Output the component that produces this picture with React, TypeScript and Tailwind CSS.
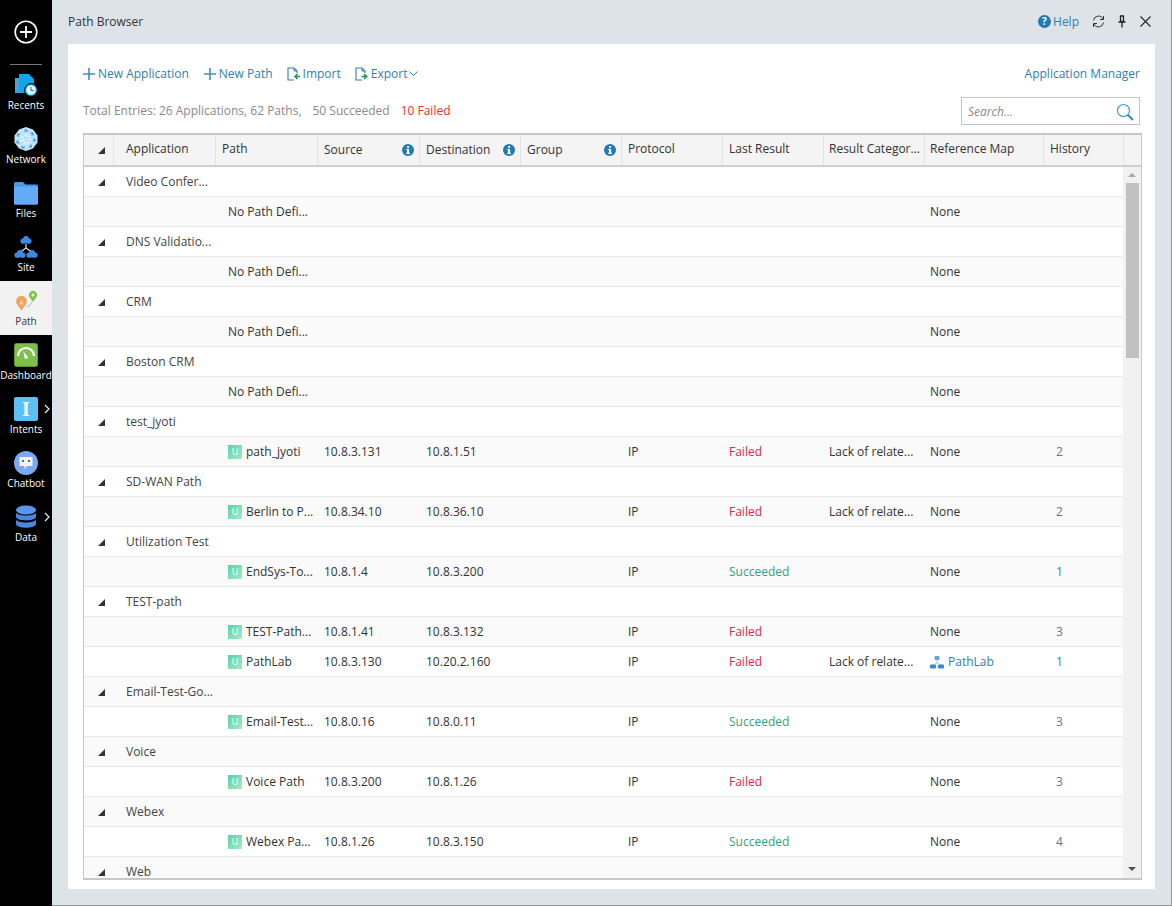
import React from "react";

const Tri = () => (
  <svg width="7" height="7" viewBox="0 0 7 7" className="block"><path d="M7 0V7H0Z" fill="#333" /></svg>
);

const Info = () => (
  <svg width="12" height="12" viewBox="0 0 13 13" className="block shrink-0">
    <circle cx="6.5" cy="6.5" r="6.5" fill="#1f7ab5" />
    <rect x="5.5" y="2.2" width="2.2" height="2" fill="#fff" />
    <path d="M4.6 5.3H7.7V9.6H8.6V10.8H4.6V9.6H5.5V6.5H4.6Z" fill="#fff" />
  </svg>
);

const Plus = () => (
  <svg width="12" height="12" viewBox="0 0 12 12" className="block"><path d="M6 0V12M0 6H12" stroke="#3f8fc0" strokeWidth="1.6" /></svg>
);

const FileIcon = ({ flip }: { flip?: boolean }) => (
  <svg width="13" height="14" viewBox="0 0 13 14" className="block">
    <path d="M7 13H1V1H7L10 4V6" fill="none" stroke="#2a7fb5" strokeWidth="1.1" />
    <path d="M7 1V4H10" fill="none" stroke="#2a7fb5" strokeWidth="1" />
    {flip ? (
      <path d="M13 9.5H8.5M10.6 7L8 9.5L10.6 12" fill="none" stroke="#1f9a55" strokeWidth="1.7" />
    ) : (
      <path d="M6.5 9.5H11M9 7L11.6 9.5L9 12" fill="none" stroke="#1f9a55" strokeWidth="1.7" />
    )}
  </svg>
);

const Recents = () => (
  <svg width="24" height="24" viewBox="0 0 24 24" className="block">
    <path d="M1 5H5V20H1Z" fill="#4a9fd8" />
    <path d="M5 1H15L20 6V20H5Z" fill="#0fa8e6" />
    <circle cx="17" cy="17" r="6.4" fill="#0fa8e6" stroke="#000" strokeWidth="1" />
    <circle cx="17" cy="17" r="4.8" fill="#e8f6fd" />
    <path d="M17 14V17.5H20" fill="none" stroke="#0f8fd0" strokeWidth="1.2" />
  </svg>
);

const NetworkIcon = () => (
  <svg width="24" height="24" viewBox="0 0 24 24" className="block">
    <path d="M12 0L19 2.5L23.5 8.5L23.5 15.5L19 21.5L12 24L5 21.5L.5 15.5L.5 8.5L5 2.5Z" fill="#bfe3fa" />
    <g fill="#3f9fe0">
      <circle cx="12" cy="4" r="1.7" /><circle cx="18" cy="7" r="1.7" /><circle cx="20" cy="13" r="1.7" />
      <circle cx="16.5" cy="19" r="1.7" /><circle cx="9" cy="20" r="1.7" /><circle cx="4" cy="15" r="1.7" />
      <circle cx="4.5" cy="8" r="1.7" /><circle cx="12" cy="12" r="2" />
    </g>
    <path d="M12 4L12 12L18 7M20 13L12 12L16.5 19M9 20L12 12L4 15M4.500 8L12 12" stroke="#fff" strokeWidth=".8" fill="none" />
  </svg>
);

const Folder = () => (
  <svg width="24" height="24" viewBox="0 0 24 24" className="block">
    <path d="M0 2.500Q0 1 1.500 1H9L11.500 3.500H22.500Q24 3.500 24 5V22Q24 23.500 22.500 23.500H1.500Q0 23.500 0 22Z" fill="#4b98ea" />
    <path d="M0 7Q0 5.500 1.500 5.500H22.500Q24 5.500 24 7V22Q24 23.500 22.500 23.500H1.500Q0 23.500 0 22Z" fill="#64aaf6" />
  </svg>
);

const Cloud = ({ x, y }: { x: number; y: number }) => (
  <g transform={`translate(${x} ${y})`} fill="#3f8ae0">
    <circle cx="3" cy="5" r="2.600" /><circle cx="6" cy="3" r="3" /><circle cx="9" cy="5" r="2.600" />
    <rect x="1.500" y="4.500" width="9" height="3" rx="1.300" />
  </g>
);

const SiteIcon = () => (
  <svg width="24" height="24" viewBox="0 0 24 24" className="block">
    <path d="M12 9V13M12 13L5 18M12 13L19 18" stroke="#cfe3f7" strokeWidth="1.200" fill="none" />
    <Cloud x={6} y={1} /><Cloud x={0} y={15} /><Cloud x={12} y={15} />
  </svg>
);

const PathIcon = () => (
  <svg width="24" height="24" viewBox="0 0 24 24" className="block">
    <path d="M12 17H15L18 13" stroke="#b9d6f2" strokeWidth="1.400" fill="none" />
    <path d="M7.500 21.500L3.300 15.800A5.400 5.400 0 1 1 11.700 15.800Z" fill="#f0a35a" />
    <text x="7.500" y="15.500" textAnchor="middle" fontSize="7" fill="#fbe3c8" fontFamily="Open Sans">A</text>
    <path d="M19 13L15.900 8.500A4 4 0 1 1 22.100 8.500Z" fill="#7cc24a" />
    <circle cx="19" cy="6" r="1.700" fill="#dff2c8" />
  </svg>
);

const DashIcon = () => (
  <svg width="24" height="24" viewBox="0 0 24 24" className="block">
    <rect x=".5" y=".5" width="23" height="23" rx="2" fill="#7fc04c" stroke="#5a9435" />
    <path d="M4 13A8 8 0 0 1 20 13" fill="none" stroke="#fff" strokeWidth="2.200" />
    <path d="M11 14L9 8L13 13Z" fill="#fff" />
    <circle cx="12" cy="14" r="1.800" fill="#fff" />
  </svg>
);

const IntentIcon = () => (
  <div className="w-6 h-6 rounded-[2px] bg-[#5cc0f5] text-white flex items-center justify-center font-bold text-[20px] font-['Liberation_Serif',serif] leading-none">I</div>
);

const ChatIcon = () => (
  <svg width="24" height="24" viewBox="0 0 24 24" className="block">
    <circle cx="12" cy="12" r="12" fill="#7aa9f2" />
    <path d="M5.500 6H18.500V15H13L10.500 18V15H5.500Z" fill="#f2f2f2" />
    <rect x="8" y="9" width="2" height="2" fill="#666" /><rect x="14" y="9" width="2" height="2" fill="#666" />
  </svg>
);

const DataIcon = () => (
  <svg width="24" height="24" viewBox="0 0 24 24" className="block">
    <ellipse cx="12" cy="5" rx="10" ry="4.500" fill="#5a96e8" />
    <path d="M2 7.500C3 11.500 21 11.500 22 7.500V12C21 16.500 3 16.500 2 12Z" fill="#4a86dc" />
    <path d="M2 14.500C3 18.500 21 18.500 22 14.500V19C21 24 3 24 2 19Z" fill="#4a86dc" />
  </svg>
);

const Arrow = () => (
  <svg width="6" height="10" viewBox="0 0 6 10" className="absolute left-[44px] top-[15px]"><path d="M1 1L5 5L1 9" fill="none" stroke="#eee" strokeWidth="1.200" /></svg>
);

const NAV = [
  { label: "Recents", icon: <Recents /> },
  { label: "Network", icon: <NetworkIcon /> },
  { label: "Files", icon: <Folder /> },
  { label: "Site", icon: <SiteIcon /> },
  { label: "Path", icon: <PathIcon />, active: true },
  { label: "Dashboard", icon: <DashIcon /> },
  { label: "Intents", icon: <IntentIcon />, more: true },
  { label: "Chatbot", icon: <ChatIcon /> },
  { label: "Data", icon: <DataIcon />, more: true },
];

type Row =
  | { g: string }
  | { none: true }
  | { p: string; s: string; d: string; r: "Failed" | "Succeeded"; c?: string; m?: string; h: string; blue?: boolean };

const ROWS: Row[] = [
  { g: "Video Confer..." }, { none: true },
  { g: "DNS Validatio..." }, { none: true },
  { g: "CRM" }, { none: true },
  { g: "Boston CRM" }, { none: true },
  { g: "test_jyoti" },
  { p: "path_jyoti", s: "10.8.3.131", d: "10.8.1.51", r: "Failed", c: "Lack of relate...", h: "2" },
  { g: "SD-WAN Path" },
  { p: "Berlin to P...", s: "10.8.34.10", d: "10.8.36.10", r: "Failed", c: "Lack of relate...", h: "2" },
  { g: "Utilization Test" },
  { p: "EndSys-To...", s: "10.8.1.4", d: "10.8.3.200", r: "Succeeded", h: "1", blue: true },
  { g: "TEST-path" },
  { p: "TEST-Path...", s: "10.8.1.41", d: "10.8.3.132", r: "Failed", h: "3" },
  { p: "PathLab", s: "10.8.3.130", d: "10.20.2.160", r: "Failed", c: "Lack of relate...", m: "PathLab", h: "1", blue: true },
  { g: "Email-Test-Go..." },
  { p: "Email-Test...", s: "10.8.0.16", d: "10.8.0.11", r: "Succeeded", h: "3" },
  { g: "Voice" },
  { p: "Voice Path", s: "10.8.3.200", d: "10.8.1.26", r: "Failed", h: "3" },
  { g: "Webex" },
  { p: "Webex Pa...", s: "10.8.1.26", d: "10.8.3.150", r: "Succeeded", h: "4" },
  { g: "Web" },
];

const GRID = "grid grid-cols-[29px_102px_102px_102px_101px_101px_101px_101px_101px_119px_80px]";

const Head = ({ text, info, cls = "pt-[6px] pl-[6px]" }: { text: string; info?: boolean; cls?: string }) => (
  <div className={`h-full border-l border-[#e3e3e3] flex items-start justify-between pr-[5px] whitespace-nowrap ${cls}`}>
    <span>{text}</span>
    {info && <span className="mt-[3px]"><Info /></span>}
  </div>
);

const MapIcon = () => (
  <svg width="14" height="13" viewBox="0 0 14 13" className="block">
    <path d="M7 4V7M3 9L7 7L11 9" stroke="#a9cdf5" strokeWidth="1" fill="none" />
    <rect x="4.500" y="0" width="5" height="4" rx="1" fill="#5fa5ee" />
    <rect x="0" y="8.500" width="6" height="4" rx="1" fill="#3f86e0" />
    <rect x="8" y="8.500" width="6" height="4" rx="1" fill="#3f86e0" />
  </svg>
);

const TableRow = ({ row, i }: { row: Row; i: number }) => {
  const bg = i % 2 ? "bg-[#fafafa]" : "bg-white";
  const base = `${GRID} h-[30px] pt-[1px] shrink-0 border-b border-[#e8e8e8] items-center ${bg}`;
  if ("g" in row) {
    return (
      <div className={base}>
        <div className="pl-[14px]"><Tri /></div>
        <div className="pl-[13px] col-span-2 text-[#444]">{row.g}</div>
      </div>
    );
  }
  if ("none" in row) {
    return (
      <div className={base}>
        <div className="col-start-3 pl-[13px]">No Path Defi...</div>
        <div className="col-start-10 pl-[6px]">None</div>
      </div>
    );
  }
  return (
    <div className={base}>
      <div className="col-start-3 pl-[13px] flex items-center gap-[4px]">
        <span className="w-[14px] h-[14px] bg-gradient-to-br from-[#55d2a3] to-[#a5e8cd] text-white text-[9px] leading-[14px] text-center shrink-0">U</span>
        <span className="whitespace-nowrap">{row.p}</span>
      </div>
      <div className="pl-[7px]">{row.s}</div>
      <div className="pl-[7px]">{row.d}</div>
      <div className="col-start-7 pl-[7px]">IP</div>
      <div className={`pl-[7px] ${row.r === "Failed" ? "text-[#ef2346]" : "text-[#2fa37c]"}`}>{row.r}</div>
      <div className="pl-[6px] whitespace-nowrap">{row.c}</div>
      <div className="pl-[6px]">
        {row.m ? (
          <span className="flex items-center gap-[4px] text-[#2f7fae]"><MapIcon />{row.m}</span>
        ) : "None"}
      </div>
      <div className={`pl-[13px] ${row.blue ? "text-[#2b86b8]" : "text-[#5d7a8c]"}`}>{row.h}</div>
    </div>
  );
};

export default function App() {
  return (
    <div className="flex w-[1172px] h-[906px] overflow-hidden bg-[#dde3e9] font-['Open_Sans',sans-serif] text-[12px] text-[#333]">
      <aside className="w-[52px] shrink-0 bg-black flex flex-col text-white">
        <div className="h-[64px] flex items-center justify-center">
          <svg width="24" height="24" viewBox="0 0 24 24" className="block">
            <circle cx="12" cy="12" r="10.800" fill="none" stroke="#fff" strokeWidth="1.600" />
            <path d="M12 6V18M6 12H18" stroke="#fff" strokeWidth="1.800" />
          </svg>
        </div>
        <div className="h-px mx-[10px] bg-[#777]" />
        {NAV.map((n) => (
          <div key={n.label} className={`relative h-[54px] flex flex-col items-center pt-[8px] ${n.active ? "bg-[#f2f2f2] text-[#333]" : ""}`}>
            <div className="h-[26px] flex items-start">{n.icon}</div>
            <div className="text-[10px] leading-[12px] whitespace-nowrap">{n.label}</div>
            {n.more && <Arrow />}
          </div>
        ))}
      </aside>

      <main className="flex-1 flex flex-col border-r border-b border-[#8f969c]">
        <header className="h-[44px] shrink-0 flex items-center pl-[16px] pr-[20px] pb-[1px]">
          <span className="text-[#333]">Path Browser</span>
          <div className="ml-auto flex items-center">
            <svg width="13" height="13" viewBox="0 0 13 13" className="block mr-[2px]">
              <circle cx="6.500" cy="6.500" r="6.500" fill="#1f7ab5" />
              <text x="6.500" y="10.300" textAnchor="middle" fontSize="10" fontWeight="700" fill="#fff" fontFamily="Open Sans">?</text>
            </svg>
            <span className="text-[#2f7fae] mr-[13px]">Help</span>
            <svg width="13" height="13" viewBox="0 0 13 13" className="block mr-[12px]">
              <path d="M1.500 5.500A5 5 0 0 1 11 4M11.500 7.500A5 5 0 0 1 2 9" fill="none" stroke="#333" strokeWidth="1" />
              <path d="M11.500 1V4.500H8M1.500 12V8.500H5" fill="none" stroke="#333" strokeWidth="1" />
            </svg>
            <svg width="10" height="13" viewBox="0 0 10 13" className="block mr-[13px]">
              <path d="M3 1H7M3.500 1V6.500H6.500V1M1.500 7H8.500M5 7V12.500" fill="none" stroke="#222" strokeWidth="1.300" />
            </svg>
            <svg width="11" height="11" viewBox="0 0 11 11" className="block">
              <path d="M.5 .5L10.500 10.500M10.500 .5L.5 10.500" stroke="#222" strokeWidth="1.100" />
            </svg>
          </div>
        </header>

        <section className="ml-[16px] w-[1087px] h-[845px] bg-white px-[15px] flex flex-col">
          <div className="h-[30px] mt-[15px] shrink-0 flex items-center text-[#2f7fae]">
            <Plus /><span className="ml-[3px] mr-[15px]">New Application</span>
            <Plus /><span className="ml-[3px] mr-[14px]">New Path</span>
            <FileIcon flip /><span className="ml-[3px] mr-[14px]">Import</span>
            <FileIcon /><span className="ml-[3px] mr-[2px]">Export</span>
            <svg width="9" height="6" viewBox="0 0 9 6" className="block"><path d="M.5 .5L4.500 4.500L8.500 .5" fill="none" stroke="#2f7fae" /></svg>
            <span className="ml-auto">Application Manager</span>
          </div>
          <div className="mt-[8px] h-[28px] shrink-0 flex items-center text-[#8a8a8a]">
            <span>Total Entries: 26 Applications, 62 Paths,</span>
            <span className="ml-[11px]">50 Succeeded</span>
            <span className="ml-[11px] text-[#fb2a2a]">10 Failed</span>
            <div className="ml-auto w-[179px] h-[28px] border border-[#c4c4c4] flex items-center pl-[6px] pr-[5px]">
              <span className="italic text-[#8c8c8c] pt-[1px]">Search...</span>
              <svg width="18" height="18" viewBox="0 0 18 18" className="block ml-auto mt-[1px]">
                <circle cx="7.500" cy="7.500" r="6" fill="none" stroke="#4a9ac9" strokeWidth="1.200" />
                <path d="M11.800 11.800L17 17" stroke="#2f7fae" strokeWidth="1.800" />
              </svg>
            </div>
          </div>

          <div className="mt-[8px] w-[1059px] h-[747px] border border-[#c8c8c8] border-t-2 border-b-2 flex flex-col overflow-hidden">
            <div className="h-[32px] shrink-0 flex border-b-2 border-[#cfcfcf] bg-[#f4f4f4]">
              <div className={`${GRID} h-full`}>
                <div className="h-full pl-[14px] pt-[12px]"><Tri /></div>
                <Head text="Application" cls="pt-[5px] pl-[12px]" />
                <Head text="Path" cls="pt-[5px] pl-[6px]" />
                <Head text="Source" info />
                <Head text="Destination" info />
                <Head text="Group" info />
                <Head text="Protocol" cls="pt-[5px] pl-[6px]" />
                <Head text="Last Result" cls="pt-[5px] pl-[6px]" />
                <Head text="Result Categor..." cls="pt-[5px] pl-[5px]" />
                <Head text="Reference Map" cls="pt-[5px] pl-[5px]" />
                <Head text="History" cls="pt-[5px] pl-[6px]" />
              </div>
              <div className="h-full flex-1 border-l border-[#e3e3e3]" />
            </div>
            <div className="flex flex-1 min-h-0">
              <div className="w-[1039px] shrink-0 flex flex-col overflow-hidden">
                {ROWS.map((r, i) => <TableRow key={i} row={r} i={i} />)}
              </div>
              <div className="flex-1 bg-[#f1f1f1] flex flex-col items-center">
                <svg width="8" height="4" viewBox="0 0 8 4" className="block mt-[6px]"><path d="M4 0L8 4H0Z" fill="#a8a8a8" /></svg>
                <div className="w-[13px] h-[175px] bg-[#c1c1c1] mt-[6px]" />
                <svg width="8" height="4" viewBox="0 0 8 4" className="block mt-auto mb-[7px]"><path d="M0 0H8L4 4Z" fill="#505050" /></svg>
              </div>
            </div>
          </div>
        </section>
      </main>
    </div>
  );
}
